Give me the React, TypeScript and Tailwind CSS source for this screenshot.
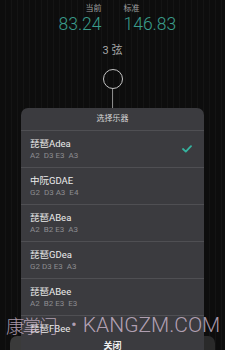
import React from "react";

const items = [
  { name: "琵琶Adea", notes: "A2  D3 E3  A3", selected: true },
  { name: "中阮GDAE", notes: "G2  D3 A3  E4", selected: false },
  { name: "琵琶ABea", notes: "A2  B2 E3  A3", selected: false },
  { name: "琵琶GDea", notes: "G2 D3 E3  A3", selected: false },
  { name: "琵琶ABee", notes: "A2  B2 E3  E3", selected: false },
  { name: "琵琶FBee", notes: "F2  B2 E3  E3", selected: false },
];

export default function App() {
  return (
    <div className="relative w-[225px] h-[350px] overflow-hidden bg-[#0d0d0d] bg-[repeating-linear-gradient(90deg,#0d0d0d_0px,#0d0d0d_5px,#141414_5px,#141414_6px)] font-['Roboto','Noto_Sans_CJK_SC',sans-serif]">
      <div className="flex flex-col items-center h-full">
        <div className="mt-[3px] flex gap-[22px]">
          <div className="w-[80px] flex flex-col items-end">
            <span className="text-[8px] leading-[11px] text-[#a0a0a0]">当前</span>
            <span className="text-[17.5px] leading-[20px] font-light text-[#3a9d8c]">83.24</span>
          </div>
          <div className="w-[80px] flex flex-col items-start">
            <span className="text-[8px] leading-[11px] text-[#a0a0a0]">标准</span>
            <span className="text-[17.5px] leading-[20px] font-light text-[#3a9d8c]">146.83</span>
          </div>
        </div>
        <div className="mt-[10px] text-[11px] leading-[14px] text-[#a8a8a8]">3 弦</div>
        <div className="mt-[11px] w-[20px] h-[20px] rounded-full border-[1.5px] border-[#c4c4c4]" />
        <div className="w-px flex-1 bg-[#8a8a8a]" />
        <div className="w-full flex gap-[6px] px-[10px] h-[14px]">
          <div className="flex-1 rounded-t-[7px] bg-[#3a3a3a]" />
          <div className="flex-1 rounded-t-[7px] bg-[#2a2a2a]" />
        </div>
      </div>

      <div className="absolute left-[21px] top-[108px] w-[183px] h-[262px] rounded-[7px] bg-[#3b3b3f] flex flex-col overflow-hidden">
        <div className="h-[23px] shrink-0 flex items-center justify-center border-b border-[#4f4f53] text-[8px] text-[#d6d6d6]">
          选择乐器
        </div>
        <div className="flex-1 overflow-hidden flex flex-col">
          {items.map((it) => (
            <div
              key={it.name}
              className="h-[37px] shrink-0 border-b border-[#4f4f53] flex items-center justify-between pl-[9px] pr-[12px]"
            >
              <div className="flex flex-col">
                <span className="text-[9.5px] leading-[12px] text-[#ececec]">{it.name}</span>
                <span className="mt-[1px] text-[8px] leading-[10px] text-[#8c8c90] whitespace-pre">{it.notes}</span>
              </div>
              {it.selected && (
                <svg width="10" height="8" viewBox="0 0 10 8">
                  <polyline points="1,4 3.8,6.6 9,1.2" fill="none" stroke="#35b29e" strokeWidth="1.8" strokeLinecap="round" strokeLinejoin="round" />
                </svg>
              )}
            </div>
          ))}
        </div>
        <div className="h-[34px] shrink-0 bg-[#3b3b3f] flex justify-center pt-[5px]">
          <span className="text-[9px] leading-[10px] font-semibold text-[#f0f0f0]">关闭</span>
        </div>
      </div>

      <div className="absolute left-[6px] top-[313px] flex items-center text-[#d2bcd2]/80 font-light whitespace-pre">
        <span className="w-[50px] text-[18.5px] leading-[24px] tracking-[-2px] font-['Noto_Sans_CJK_SC',sans-serif]">康掌门</span>
        <span className="ml-[15px] text-[18px] leading-[24px]">•</span>
        <span className="ml-[6px] text-[21px] leading-[24px] font-['Roboto',sans-serif]">KANGZM.COM</span>
      </div>
    </div>
  );
}
